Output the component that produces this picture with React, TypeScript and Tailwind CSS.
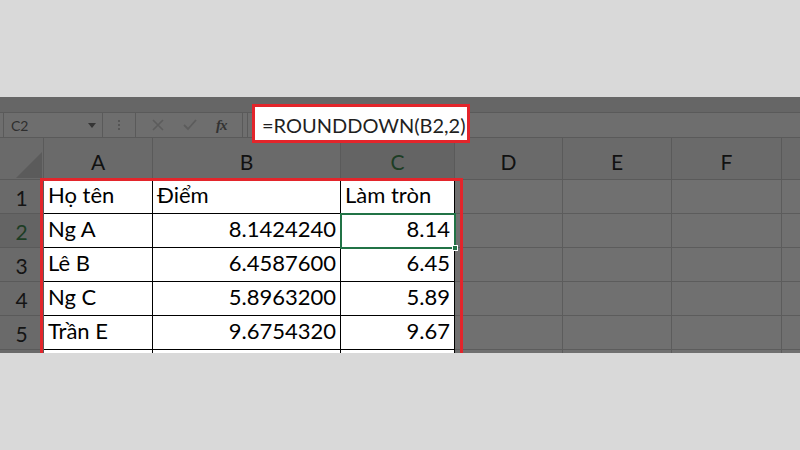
const cols = [
  { key: 'A', w: 'w-[109px]' },
  { key: 'B', w: 'w-[188px]' },
  { key: 'C', w: 'w-[114px]' },
  { key: 'D', w: 'w-[108px]' },
  { key: 'E', w: 'w-[109px]' },
  { key: 'F', w: 'w-[110px]' },
]

const rows = [
  { n: '1', a: 'Họ tên', b: 'Điểm', c: 'Làm tròn', head: true },
  { n: '2', a: 'Ng A', b: '8.1424240', c: '8.14' },
  { n: '3', a: 'Lê B', b: '6.4587600', c: '6.45' },
  { n: '4', a: 'Ng C', b: '5.8963200', c: '5.89' },
  { n: '5', a: 'Trần E', b: '9.6754320', c: '9.67' },
  { n: '', a: '', b: '', c: '' },
]

function Cell({ w, text, right, white }: { w: string; text?: string; right?: boolean; white?: boolean }) {
  return (
    <div
      className={`${w} h-full shrink-0 flex items-end pb-[2px] px-[4px] border-r border-b ${
        white ? 'bg-white border-black text-black' : 'bg-[#707070] border-[#5c5c5c]'
      } ${right ? 'justify-end' : 'justify-start'}`}
    >
      {text}
    </div>
  )
}

export default function App() {
  return (
    <div className="w-[800px] h-[450px] bg-[#d9d9d9] flex flex-col font-['Lato',sans-serif]">
      <div className="h-[97px] shrink-0" />
      <div className="relative h-[256px] shrink-0 overflow-hidden bg-[#707070]">
        {/* ribbon edge */}
        <div className="h-[15px] bg-[#666666]" />
        {/* formula bar */}
        <div className="h-[26px] flex items-stretch bg-[#6e6e6e] border-y border-[#5a5a5a]">
          <div className="ml-[3px] w-[100px] border-x border-[#5a5a5a] flex items-center justify-between pl-[7px] pr-[6px]">
            <span className="text-[14px] text-[#2e2e2e]">C2</span>
            <svg width="8" height="5" viewBox="0 0 8 5">
              <path d="M0 0h8L4 5z" fill="#353535" />
            </svg>
          </div>
          <div className="w-[32px] flex flex-col items-center justify-center gap-[2px]">
            <span className="w-[2px] h-[2px] bg-[#555]" />
            <span className="w-[2px] h-[2px] bg-[#555]" />
            <span className="w-[2px] h-[2px] bg-[#555]" />
          </div>
          <div className="w-[108px] border-x border-[#5a5a5a] flex items-center justify-around px-[6px]">
            <svg width="12" height="12" viewBox="0 0 12 12">
              <path d="M1 1l10 10M11 1L1 11" stroke="#5c5c5c" strokeWidth="1.6" />
            </svg>
            <svg width="14" height="12" viewBox="0 0 14 12">
              <path d="M1 6l4 4 8-9" stroke="#5c5c5c" strokeWidth="1.8" fill="none" />
            </svg>
            <span className="font-['Liberation_Serif',serif] italic font-bold text-[15px] text-[#333] tracking-[-1px]">fx</span>
          </div>
          <div className="ml-[4px] flex-1 border-l border-[#5a5a5a]" />
        </div>
        {/* column headers */}
        <div className="h-[42px] flex bg-[#6a6a6a] text-[21px] text-[#111]">
          <div className="w-[44px] shrink-0 relative border-r border-b border-[#5a5a5a]">
            <svg className="absolute left-[16px] top-[14px]" width="26" height="26" viewBox="0 0 26 26">
              <path d="M26 0V26H0z" fill="#5b5b5b" />
            </svg>
          </div>
          {cols.map((c) => (
            <div
              key={c.key}
              className={`${c.w} shrink-0 flex items-center justify-center border-r border-b border-[#5a5a5a] pt-[6px] ${
                c.key === 'C' ? 'bg-[#646464] text-[#1d3d24]' : ''
              }`}
            >
              {c.key}
            </div>
          ))}
          <div className="flex-1 border-b border-[#5a5a5a]" />
        </div>
        {/* rows */}
        {rows.map((r, i) => (
          <div key={i} className="h-[34px] shrink-0 flex text-[22px]">
            <div
              className={`w-[44px] shrink-0 flex items-center justify-center border-r border-b border-[#5a5a5a] text-[21px] pt-[3px] ${
                r.n === '2' ? 'bg-[#646464] text-[#1d3d24]' : 'bg-[#6a6a6a] text-[#141414]'
              }`}
            >
              {r.n}
            </div>
            <Cell w="w-[109px]" text={r.a} white />
            <Cell w="w-[188px]" text={r.b} right={!r.head} white />
            <Cell w="w-[114px]" text={r.c} right={!r.head} white />
            <Cell w="w-[108px]" />
            <Cell w="w-[109px]" />
            <Cell w="w-[110px]" />
            <div className="flex-1 border-b border-[#5c5c5c]" />
          </div>
        ))}
        {/* selection on C2 */}
        <div className="absolute left-[340px] top-[116px] w-[116px] h-[36px] border-2 border-[#217346]" />
        <div className="absolute left-[452px] top-[148px] w-[6px] h-[6px] bg-[#217346] border border-white" />
        {/* red highlight around table */}
        <div className="absolute left-[40px] top-[81px] w-[423px] h-[200px] border-[3px] border-[#e3252b]" />
      </div>
      {/* formula highlight */}
      <div className="absolute left-[252px] top-[104px] w-[218px] h-[39px] border-[3px] border-[#e3252b] bg-white flex items-center pl-[7px] pt-[2px] text-[20px] text-[#1f1f1f]">
        =ROUNDDOWN(B2,2)
      </div>
    </div>
  )
}
